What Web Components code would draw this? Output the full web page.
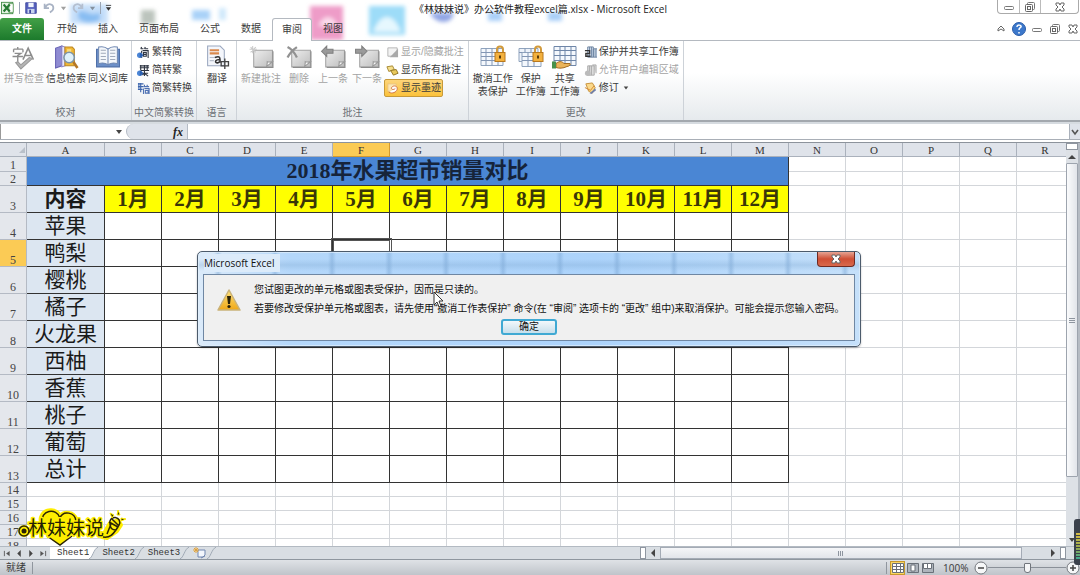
<!DOCTYPE html>
<html lang="zh-CN">
<head>
<meta charset="utf-8">
<title>《林妹妹说》办公软件教程excel篇.xlsx - Microsoft Excel</title>
<style>
html, body { margin: 0; height: 100%; }
body { font: 10px/14px "Liberation Sans", "Noto Sans CJK SC", sans-serif; color: #3b3b3b; background: #fff; overflow: hidden; }
</style>
</head>
<body>
<excel-app></excel-app>
<script>
const define = (name, css, html, setup) => {
  const t = document.createElement('template');
  t.innerHTML = `<style>*{box-sizing:border-box}button,input{font:inherit;color:inherit;margin:0;padding:0;border:0;background:none;outline:0}svg{display:block}${css}</style>${html}`;
  customElements.define(name, class extends HTMLElement {
    constructor() {
      super();
      this.attachShadow({ mode: 'open' }).append(t.content.cloneNode(true));
    }
    connectedCallback() { if (setup && !this.ready) { this.ready = true; setup(this, this.shadowRoot); } }
  });
};

/* ---------- icons ---------- */
const note = '<path d="M5 5h18v16H5z" fill="url(#n)" stroke="#a3a3a3"/><path d="M6 21.500h17.500V6" fill="none" stroke="#8c8c8c"/><path d="M17 21c1-1 1-3 1-5 2 1 4 0 5 0z" fill="#fafafa" stroke="#999"/>';
const ndef = '<defs><linearGradient id="n" x2="1" y2="1"><stop stop-color="#eee"/><stop offset="1" stop-color="#bdbdbd"/></linearGradient></defs>';
const sheet = '<path d="M1 3h22v17H1z" fill="#f4f8fd" stroke="#8fa3bd"/><path d="M1 7h22M1 11h22M1 15h22M6 3v17M12 3v17M18 3v17" stroke="#8296b4" fill="none"/>';
const lock = '<path d="M17 7V4a3 3 0 016 0v3" fill="none" stroke="#d19a3c" stroke-width="2"/><rect x="15" y="7" width="10" height="9" fill="#f3b13e" stroke="#b8781e"/><path d="M20 10v3" stroke="#5a3a08" stroke-width="2"/>';
const arrowBall = '<circle cx="3" cy="10" r="3" fill="#4c86d6"/><path d="M3 7l4 3-4 3z" fill="#2b5fb0"/>';
const ICONS = {
  excel: ['0 0 16 16', '<rect x=".5" y="1.500" width="13" height="13" fill="#e4f2e2" stroke="#3f8a45"/><path d="M9 3h5v10H9z" fill="#fff" stroke="#5b9c5c"/><path d="M3 4l7 8M10 4l-7 8" stroke="#267a33" stroke-width="2.400"/>'],
  save: ['0 0 16 16', '<path d="M2 2h12v12H2z" fill="#5560bd" stroke="#3d469b"/><path d="M5 2h6v5H5z" fill="#eef2fb"/><path d="M4 9h8v5H4z" fill="#c8d4ee"/><path d="M6 10h2v4H6z" fill="#3d469b"/>'],
  undo: ['0 0 16 16', '<path d="M3 3v5h5M4 7c3-5 9-4 9 1 0 3-2 4-4 5" fill="none" stroke="#a9b3c4" stroke-width="2"/>'],
  redo: ['0 0 16 16', '<path d="M13 3v5H8M12 7c-3-5-9-4-9 1 0 3 2 4 4 5" fill="none" stroke="#b4bfd0" stroke-width="2"/>'],
  down: ['0 0 8 8', '<path d="M1 2h6L4 6z" fill="#444"/>'],
  qat: ['0 0 8 8', '<path d="M1 1h6" stroke="#333"/><path d="M1 3h6L4 7z" fill="#333"/>'],
  spell: ['0 0 24 24', '<path d="M2 4h9M6 2v2M2 4v3M11 4v3M3 8h6l-3 2v6M1 11h10" fill="none" stroke="#8b8b8b" stroke-width="1.300"/><path d="M11 14l5-11 5 11M13 10h7" fill="none" stroke="#8b8b8b" stroke-width="1.500"/><path d="M4 17l5 6L20 13l-3-1-8 7-3-3z" fill="#b5b5b5" stroke="#999"/>'],
  research: ['0 0 24 24', '<path d="M2 3l6-2v19l-6 2z" fill="#8f8bd2" stroke="#6762b4"/><path d="M8 1l3 1v18l-3 1z" fill="#e9e7fb" stroke="#8b87c9"/><path d="M11 2h7l2 2v16h-9z" fill="#f0b834" stroke="#bd8724"/><path d="M13 4h4v12h-4z" fill="#fadb82"/><path d="M19 16l4 6" stroke="#b67826" stroke-width="2.500"/><circle cx="15" cy="12" r="5" fill="#dff1fb" stroke="#7d94a7" stroke-width="1.500"/>'],
  book: ['0 0 24 24', '<path d="M1 4h22v17H1z" fill="#6c8fc8" stroke="#4e6fa8"/><path d="M3 2c4-1 7 0 9 2v15c-3-2-6-2-9-1zM21 2c-4-1-7 0-9 2v15c3-2 6-2 9-1z" fill="#f4f7fb" stroke="#7189b2"/><path d="M5 5h5M5 8h5M5 11h5M5 14h5M14 5h5M14 8h5M14 11h5M14 14h5" stroke="#a0aabb"/>'],
  s2t: ['0 0 14 14', '<path d="M4 3h3M5 1L4 3M8 3h4M9 1L8 3M5 5v8M6 5h6v8M7 7h3v4H7zM7 9h3" stroke="#303744" fill="none" stroke-width="1.200"/>' + arrowBall],
  t2s: ['0 0 14 14', '<path d="M3 2h10M4 1v6M3 4h10M8 1v6M11 1v6M4 7h9M8 7v6M4 10h8M5 12l3-2 4 3" stroke="#303744" fill="none" stroke-width="1.200"/>' + arrowBall],
  conv: ['0 0 14 14', '<path d="M1 2h6M2 1v6M1 5h6M4 1v10M1 8h5" stroke="#3c65ad" fill="none" stroke-width="1.200"/><path d="M7 5h6M8 3v2M11 3v2M7 7v6M8 7h5v6M9 9h3v3H9z" stroke="#4f72b4" fill="none" stroke-width="1.200"/>'],
  translate: ['0 0 24 24', '<path d="M3 1h12l4 4v15H3z" fill="#f4f6fb" stroke="#9aa7bf"/><path d="M5 5h9M5 8h9" stroke="#d9894e" stroke-width="2"/><path d="M5 12h6M5 15h4" stroke="#b8bfcc"/><path d="M10 12c5-2 5 0 5 5M15 14c-6 0-5 4-2 3l2-1" fill="none" stroke="#333" stroke-width="1.500"/><path d="M16 16h7v4h-7zM19.500 13v10" fill="none" stroke="#444" stroke-width="1.300"/>'],
  newnote: ['0 0 24 24', ndef + note + '<path d="M4 1v7M1 4h7M2 2l5 5M7 2L2 7" stroke="#c9c9c9"/>'],
  delnote: ['0 0 24 24', ndef + note + '<path d="M1 2c4 2 7 6 9 10M10 2C7 4 3 8 1 12" fill="none" stroke="#929292" stroke-width="2.200"/>'],
  prevnote: ['0 0 24 24', ndef + note + '<path d="M1 6l5-5v3h6v4H6v3z" fill="#9a9a9a" stroke="#808080"/>'],
  nextnote: ['0 0 24 24', ndef + note + '<path d="M12 6L7 1v3H1v4h6v3z" fill="#9a9a9a" stroke="#808080"/>'],
  shownote: ['0 0 14 14', '<path d="M2 2h10v9H2z" fill="#f3f3f3" stroke="#b2b2b2"/><path d="M13 3v9H4z" fill="#a9a9a9"/>'],
  allnotes: ['0 0 14 14', '<path d="M1 3l6-1 2 4-6 2z" fill="#f6df8c" stroke="#a38631"/><path d="M5 7l6-1 2 4-5 2z" fill="#e9c95c" stroke="#8e7020"/>'],
  ink: ['0 0 14 14', '<path d="M2 2h9v8H2z" fill="#fbe6b5" stroke="#ecc47a"/><path d="M3 11c4 2 8 0 9-3 1-4-4-5-6-2-1 2 2 3 4 1" fill="#fff" stroke="#d0703c"/>'],
  unprotect: ['0 0 26 24', sheet + lock],
  protect: ['0 0 26 24', '<path d="M1 3h19v13H1z" fill="#eef3fa" stroke="#8fa3bd"/><path d="M4 7h19v14H4z" fill="#f4f8fd" stroke="#8fa3bd"/><path d="M4 11h19M4 15h19M10 7v14M16 7v14M1 7h3M7 3v4M13 3v4" stroke="#8296b4"/>' + lock],
  share: ['0 0 26 24', '<path d="M2 1h22v19H2z" fill="#f4f8fd" stroke="#6f86a8"/><path d="M2 5h22M2 10h22M2 15h22M8 1v19M13 1v19M19 1v19" stroke="#6f86a8"/><path d="M4 18c4-3 6-2 8 0h6c1 1-1 3-3 3-4 2-8 2-11 1z" fill="#eab45a" stroke="#a36c22"/><path d="M0 16h4v7H0z" fill="#47914a"/>'],
  protshare: ['0 0 14 14', '<path d="M4 1h6v11H4zM10 3h4v9h-4z" fill="#d6e2f1" stroke="#6b829f"/><path d="M6 1v11M8 1v11M12 3v9" stroke="#6b829f"/><path d="M1 5h5v3H2v3h5" fill="none" stroke="#333" stroke-width="1.500"/>'],
  users: ['0 0 14 14', '<path d="M4 2h7v10H4zM9 1h4v9" fill="#dcdcdc" stroke="#a9a9a9"/><path d="M6 2v10M8 2v10" stroke="#a9a9a9"/><circle cx="4" cy="10" r="3" fill="#bbb"/>'],
  track: ['0 0 14 14', '<path d="M2 2l7-1 3 5-3 6-4-2z" fill="#fbd98b" stroke="#c69038"/><path d="M1 6l6 3 4-5" fill="none" stroke="#d4862d"/><path d="M6 12l6-5 1 2-5 4z" fill="#6f7faa"/>'],
  wmin: ['0 0 14 12', '<rect x="2.500" y="5.500" width="9" height="3" rx="1" fill="#fff" stroke="#777"/>'],
  wrest: ['0 0 14 12', '<rect x="4.500" y="1.500" width="7" height="7" rx="1" fill="#fff" stroke="#777"/><rect x="2.500" y="3.500" width="7" height="7" rx="1" fill="#fff" stroke="#666"/><rect x="4.500" y="5.500" width="3" height="3" fill="none" stroke="#666"/>'],
  wclose: ['0 0 14 12', '<path d="M3 2h3l1 2 1-2h3v2L9 6l2 2v2H8L7 8l-1 2H3V8l2-2-2-2z" fill="#fff" stroke="#666"/>'],
  caretup: ['0 0 14 12', '<path d="M4 8V6l3-3 3 3v2L7 6z" fill="#fff" stroke="#666"/>'],
  help: ['0 0 14 14', '<circle cx="7" cy="7" r="6.500" fill="#3c78cb" stroke="#2b5ca8"/><path d="M5 5c0-3 5-2 4 0-1 1-2 1-2 3M7 10v1.500" stroke="#fff" stroke-width="1.500" fill="none"/>'],
  left: ['0 0 8 8', '<path d="M6 0v8L2 4z" fill="#444"/>'],
  right: ['0 0 8 8', '<path d="M2 0v8l4-4z" fill="#444"/>'],
  up: ['0 0 8 8', '<path d="M0 6h8L4 2z" fill="#444"/>'],
  first: ['0 0 8 8', '<path d="M1 1v6" stroke="#555"/><path d="M7 1v6L3 4z" fill="#555"/>'],
  last: ['0 0 8 8', '<path d="M7 1v6" stroke="#555"/><path d="M1 1v6l4-3z" fill="#555"/>'],
  chevron: ['0 0 8 8', '<path d="M1 2l3 4 3-4" fill="none" stroke="#555" stroke-width="1.600"/>'],
  newsheet: ['0 0 14 12', '<path d="M5 3h7v5l-2 2H5z" fill="#f2f6fc" stroke="#7187b0"/><path d="M12 9l-4 2" stroke="#7187b0"/><path d="M3 0v6M0 3h6M1 1l4 4M5 1L1 5" stroke="#e2a33a"/>'],
  vnormal: ['0 0 12 10', '<path d="M.5.500h11v9H.5z" fill="#fff" stroke="#6a7078"/><path d="M1 3.500h10M1 6.500h10M4.500 1v8M8.500 1v8" stroke="#6a7078"/>'],
  vlayout: ['0 0 12 10', '<path d="M.5.500h11v9H.5z" fill="#aeb4bc" stroke="#6a7078"/><path d="M4 2h4v6H4z" fill="#fff" stroke="#6a7078"/>'],
  vbreak: ['0 0 12 10', '<path d="M.5.500h11v9H.5z" fill="#aeb4bc" stroke="#6a7078"/><path d="M1.500.500h4v5h-4zM5.500.500h4v5h-4z" fill="#fff" stroke="#6a7078"/>'],
  minus: ['0 0 14 14', '<circle cx="7" cy="7" r="6" fill="#f6f7f8" stroke="#74787e"/><path d="M4 7h6" stroke="#444" stroke-width="1.500"/>'],
  plus: ['0 0 14 14', '<circle cx="7" cy="7" r="6" fill="#f6f7f8" stroke="#74787e"/><path d="M4 7h6M7 4v6" stroke="#444" stroke-width="1.500"/>'],
  warn: ['0 0 26 24', '<defs><linearGradient id="w" y2="1" x2="0"><stop stop-color="#ffe27a"/><stop offset="1" stop-color="#f0a818"/></linearGradient></defs><path d="M13 2l11 20H2z" fill="url(#w)" stroke="#c9b27a" stroke-width="1.500" stroke-linejoin="round"/><path d="M11 8h4l-1 8h-2z" fill="#2b2208"/><circle cx="13" cy="18.500" r="1.600" fill="#2b2208"/>'],
  corner: ['0 0 8 8', '<path d="M7 1v6H1z" fill="#b9c0c9"/>'],
  slant: ['0 0 10 13', '<path d="M0 13C4 12 5 2 10 0" fill="none" stroke="#9aa4b0"/>'],
  slanton: ['0 0 10 13', '<path d="M0 0h10C5 2 4 12 0 13z" fill="#fff"/><path d="M0 13C4 12 5 2 10 0" fill="none" stroke="#9aa4b0"/>']
};
define('ui-icon', ':host{display:block;flex:none;width:16px;height:16px}svg{width:100%;height:100%}', '', (host, root) => {
  const [box, body] = ICONS[host.getAttribute('name')];
  root.append(document.createRange().createContextualFragment(`<svg viewBox="${box}" aria-hidden="true">${body}</svg>`));
});
const makeIcon = name => {
  const i = document.createElement('ui-icon');
  i.setAttribute('name', name);
  return i;
};

/* ---------- title bar ---------- */
define('title-bar', `
:host{display:flex;height:18px;align-items:center;padding-left:1px;color:#222}
ui-icon{width:14px;height:14px}.s{width:7px;height:7px;opacity:.5}.q{width:7px;height:8px}
.tools{display:flex;align-items:center;gap:4px;flex:1;margin-top:-2px}
i{width:1px;height:12px;background:#99a4b3}
h1{margin:0;font:10px/16px "Open Sans","Noto Sans CJK SC",sans-serif;flex:none;white-space:pre}
.win{flex:1;display:flex;justify-content:flex-end;align-self:flex-start}
.box{display:flex;height:14px;border:1px solid #aaa;border-top:0;border-radius:0 0 4px 4px;margin-right:1px}
button{display:grid;place-items:center;width:21px}button+button{border-left:1px solid #bbb}button:last-child{width:38px}
`, `<div class="tools"><ui-icon name="excel"></ui-icon><i></i><ui-icon name="save"></ui-icon><ui-icon name="undo"></ui-icon><ui-icon class="s" name="down"></ui-icon><ui-icon name="redo"></ui-icon><ui-icon class="s" name="down"></ui-icon><i></i><ui-icon class="q" name="qat"></ui-icon></div>
<h1>《林妹妹说》办公软件教程excel篇.xlsx - Microsoft Excel</h1>
<div class="win"><div class="box"><button aria-label="最小化"><ui-icon name="wmin"></ui-icon></button><button aria-label="还原"><ui-icon name="wrest"></ui-icon></button><button aria-label="关闭"><ui-icon name="wclose"></ui-icon></button></div></div>`);

define('ribbon-tab', `
:host{display:block}
button{height:22px;padding:0 10px;display:block;white-space:nowrap;line-height:20px}
:host([file]) button{padding:0 12px;color:#fff;font-weight:bold;background:linear-gradient(#43a047,#1c7a2c);border-radius:3px 3px 0 0}
:host([file]){margin-right:2px}
:host([on]) button{border:1px solid #b4b9c0;border-bottom:0;border-radius:3px 3px 0 0;background:#fff;padding:0 9px;height:23px;margin-bottom:-1px;line-height:18px;position:relative}
`, '<button><slot></slot></button>');

define('ribbon-tabs', `
:host{display:flex;height:23px;border-bottom:1px solid #b4b9c0;justify-content:space-between}
nav{display:flex;gap:1px}
.r{display:flex;align-items:center;gap:4px}
ui-icon{width:14px;height:12px}ui-icon[name=help]{height:14px}
`, `<nav><ribbon-tab file>文件</ribbon-tab><ribbon-tab>开始</ribbon-tab><ribbon-tab>插入</ribbon-tab><ribbon-tab>页面布局</ribbon-tab><ribbon-tab>公式</ribbon-tab><ribbon-tab>数据</ribbon-tab><ribbon-tab on>审阅</ribbon-tab><ribbon-tab>视图</ribbon-tab></nav>
<div class="r"><button aria-label="折叠功能区"><ui-icon name="caretup"></ui-icon></button><button aria-label="帮助"><ui-icon name="help"></ui-icon></button><button aria-label="最小化工作簿"><ui-icon name="wmin"></ui-icon></button><button aria-label="还原工作簿"><ui-icon name="wrest"></ui-icon></button><button aria-label="关闭工作簿"><ui-icon name="wclose"></ui-icon></button></div>`);

/* blurred desktop glimpsed through the glass frame */
define('glass-backdrop', ':host{position:absolute;inset:0 0 auto 0;height:40px;overflow:hidden;z-index:-1}svg{width:420px;height:40px;overflow:visible}', `
<svg aria-hidden="true"><defs><filter id="b" x="-20%" y="-20%" width="140%" height="140%"><feGaussianBlur stdDeviation="2"/></filter></defs><g filter="url(#b)">
<path d="M70 4h38v20H70z" fill="#c6dff9"/><path d="M78 12c8-4 12 6 22 0v8c-8 4-16 4-22-2z" fill="#88bdf2"/>
<path d="M141 10h14v14h-14z" fill="#bcc4bd"/><path d="M192 10h18v10h-18z" fill="#a9d1f8"/><path d="M219 8h7v12h-7z" fill="#cfe8fb"/>
<path d="M310 6h33v34h-33z" fill="#ee9cc8"/><path d="M318 26c6-12 14-12 20 0z" fill="#fbdcec"/>
<path d="M369 6h36v29h-36z" fill="#9ddcf8"/><path d="M373 32c8-20 20-20 28 0z" fill="#e6f8fe"/>
<path d="M430 13h24c-2 12-18 12-24 0z" fill="#8fa4e4"/><path d="M488 12h14v9h-14z" fill="#a9cff8"/><path d="M548 12h14v9h-14z" fill="#a9cff8"/></g></svg>`);

/* ---------- ribbon ---------- */
define('ribbon-group', `
:host{display:flex;flex-direction:column;border-right:1px solid #cdd2d8;white-space:nowrap}
.body{display:flex;flex:1;padding:2px 2px 0 3px}
.name{text-align:center;color:#6b6f75;height:15px;line-height:15px}
`, '<div class="body"><slot></slot></div><div class="name"></div>', (h, r) => { r.querySelector('.name').textContent = h.getAttribute('label'); });

define('big-button', `
:host{display:block;width:42px}:host([narrow]){width:34px}
button{width:100%;display:flex;flex-direction:column;align-items:center;gap:2px;padding-top:2px;line-height:13px;text-align:center}
button:disabled{color:#a3a3a3}ui-icon{width:26px;height:25px}
`, '<button><span><slot></slot></span></button>', (h, r) => {
  const b = r.querySelector('button');
  b.prepend(makeIcon(h.getAttribute('icon')));
  b.disabled = h.hasAttribute('off');
});

define('small-button', `
:host{display:block}
button{display:flex;align-items:center;gap:2px;height:18px;line-height:16px;padding:0 1px;border:1px solid transparent}
button:disabled{color:#a3a3a3}
:host([on]) button{background:linear-gradient(#fdd57a,#fbc23c);border-color:#c79a3a;border-radius:2px}
ui-icon{width:13px;height:13px}.d{width:6px;height:6px;margin-left:2px;display:none}:host([menu]) .d{display:block}
`, '<button><span><slot></slot></span><ui-icon class="d" name="down"></ui-icon></button>', (h, r) => {
  const b = r.querySelector('button');
  b.prepend(makeIcon(h.getAttribute('icon')));
  b.disabled = h.hasAttribute('off');
});

define('excel-ribbon', `
:host{display:flex;height:81px;box-sizing:border-box;background:linear-gradient(#fff 40%,#e6eaed);border-bottom:2px solid #a3a8ae}
.col{display:flex;flex-direction:column}
`, `
<ribbon-group label="校对"><big-button icon="spell" off>拼写检查</big-button><big-button icon="research">信息检索</big-button><big-button icon="book">同义词库</big-button></ribbon-group>
<ribbon-group label="中文简繁转换"><div class="col"><small-button icon="s2t">繁转简</small-button><small-button icon="t2s">简转繁</small-button><small-button icon="conv">简繁转换</small-button></div></ribbon-group>
<ribbon-group label="语言"><big-button narrow icon="translate">翻译</big-button></ribbon-group>
<ribbon-group label="批注"><big-button icon="newnote" off>新建批注</big-button><big-button narrow icon="delnote" off>删除</big-button><big-button narrow icon="prevnote" off>上一条</big-button><big-button narrow icon="nextnote" off>下一条</big-button><div class="col"><small-button icon="shownote" off>显示/隐藏批注</small-button><small-button icon="allnotes">显示所有批注</small-button><small-button icon="ink" on>显示墨迹</small-button></div></ribbon-group>
<ribbon-group label="更改"><big-button icon="unprotect">撤消工作<br>表保护</big-button><big-button narrow icon="protect">保护<br>工作簿</big-button><big-button narrow icon="share">共享<br>工作簿</big-button><div class="col"><small-button icon="protshare">保护并共享工作簿</small-button><small-button icon="users" off>允许用户编辑区域</small-button><small-button icon="track" menu>修订</small-button></div></ribbon-group>`);

define('formula-bar', `
:host{display:flex;height:18px;background:#fff;border-top:2px solid #d6dbe0;border-bottom:1px solid #a9afb7;box-sizing:border-box}
.name{display:flex;align-items:center;width:126px;padding-right:3px;border-left:1px solid #999}
.name input{flex:1;min-width:0}
.fx{width:62px;background:#dfe3ea;border:solid #b4bbc5;border-width:0 1px 0 1px;border-radius:8px 0 0 8px;display:flex;justify-content:flex-end;align-items:center;padding-right:4px;font:italic bold 12px/14px "Liberation Serif",serif;color:#222}
.f{flex:1;min-width:0;padding:0 4px}
.x{width:11px;background:#dfe3ea;border-left:1px solid #aab1bb;display:grid;place-items:center}
ui-icon{width:8px;height:8px}
`, '<div class="name"><input aria-label="名称框"><button aria-label="名称列表"><ui-icon name="down"></ui-icon></button></div><button class="fx" aria-label="插入函数">fx</button><input class="f" aria-label="编辑栏"><button class="x" aria-label="展开编辑栏"><ui-icon name="chevron"></ui-icon></button>');

/* ---------- worksheet ---------- */
define('sheet-grid', `
:host{display:block;overflow:hidden;min-width:0;min-height:0;background:#fff}
table{table-layout:fixed;border-collapse:separate;border-spacing:0;width:1074px}
th,td{padding:0;border:solid #d3d6da;border-width:0 1px 1px 0;height:27px;white-space:nowrap;overflow:hidden;text-align:center}
thead th{height:14px;background:#dfe3ea;border-color:#aab1bc;font:11px/12px "Liberation Serif",serif;color:#333;padding-top:1px}
tbody th{background:#e4e7ec;border-color:#b4bac4;font:12px/12px "Liberation Serif",serif;color:#444;vertical-align:bottom}
tr.s th,tr.s td{height:14px}tr.t th{height:15px}
thead th.on{background:#fbcb55;border-color:#d39a2f}tbody th.on{background:#fbcb55}
td.k{border-color:#333}
td.a{background:#dce6f1;font:21px/26px "Liberation Serif","Noto Sans CJK SC",serif;color:#1a1a1a}
td.b{font-weight:bold}
td.h{background:#ffff00;font:bold 21px/26px "Liberation Serif","Noto Sans CJK SC",serif;color:#3a3708}
td.title{background:#4a86d4;font:bold 22px/28px "Liberation Serif","Noto Sans CJK SC",serif;color:#16243a}
td.cur{outline:3px double #555;outline-offset:-1px;position:relative}
ui-icon{width:8px;height:8px;margin-left:auto}
`, '<table aria-label="2018年水果超市销量对比"></table>', (h, r) => {
  const letters = 'ABCDEFGHIJKLMNOPQR'.split('');
  const fruit = ['苹果', '鸭梨', '樱桃', '橘子', '火龙果', '西柚', '香蕉', '桃子', '葡萄', '总计'];
  const blank = n => '<td></td>'.repeat(n);
  let s = '<colgroup><col style="width:27px"><col style="width:78px">' + '<col style="width:57px">'.repeat(17) + '</colgroup><thead><tr><th><ui-icon name="corner"></ui-icon></th>';
  s += letters.map(l => `<th${l === 'F' ? ' class="on"' : ''}>${l}</th>`).join('') + '</tr></thead><tbody>';
  s += '<tr class="s t"><th>1</th><td class="k title" colspan="13" rowspan="2">2018年水果超市销量对比</td>' + blank(5) + '</tr><tr class="s"><th>2</th>' + blank(5) + '</tr>';
  s += '<tr><th>3</th><td class="k a b">内容</td>';
  for (let m = 1; m < 13; m++) s += `<td class="k h">${m}月</td>`;
  s += blank(5) + '</tr>';
  fruit.forEach((f, i) => {
    const n = i + 4;
    s += `<tr><th${n === 5 ? ' class="on"' : ''}>${n}</th><td class="k a">${f}</td>`;
    for (let m = 0; m < 12; m++) s += `<td class="k${n === 5 && m === 4 ? ' cur' : ''}"></td>`;
    s += blank(5) + '</tr>';
  });
  for (let n = 14; n < 19; n++) s += `<tr class="s"><th>${n}</th>${blank(18)}</tr>`;
  r.querySelector('table').innerHTML = s + '</tbody>';
});

define('v-scroll', `
:host{display:flex;flex-direction:column;background:#dde1e6;align-items:stretch;border-right:2px solid #b5bbc3;box-sizing:border-box}
.split{height:7px;border:1px solid #8f96a0;background:#fff}
button{display:grid;place-items:center;height:13px}ui-icon{width:8px;height:8px}
.thumb{flex:84;border:1px solid #9da4ae;border-radius:1px;background:linear-gradient(90deg,#fafbfc,#e2e5ea);display:grid;place-items:center}
.thumb i{width:6px;height:5px;background:repeating-linear-gradient(#8e959f 0 1px,transparent 1px 2px)}
.rest{flex:15}
`, '<div class="split"></div><button aria-label="向上滚动"><ui-icon name="up"></ui-icon></button><div class="thumb"><i></i></div><div class="rest"></div><button aria-label="向下滚动"><ui-icon name="down"></ui-icon></button>');

define('sheet-bar', `
:host{display:flex;height:14px;background:#d9dee3;border-top:1px solid #b3bac2;border-bottom:1px solid #8f979f;box-sizing:border-box;font:9px/12px "Liberation Mono",monospace;color:#333}
.nav{display:flex;align-items:center;gap:4px;padding:0 3px;width:50px}
.nav ui-icon{width:8px;height:7px}
.tabs{display:flex;flex:1}.tabs button{padding-left:4px;line-height:13px}.tabs>ui-icon{width:9px;height:12px}
.tabs .on{background:#fff;padding-left:7px}.new ui-icon{width:14px;height:12px}
.h{display:flex;align-items:center;width:426px;gap:3px}
.h button{display:grid}.h button ui-icon{width:8px;height:8px}
.split{width:6px;height:12px;border:1px solid #8f96a0;background:#fff}
.thumb{flex:1;height:12px;border:1px solid #a4abb5;background:linear-gradient(#f5f6f8,#e2e5ea);display:grid;place-items:center;margin-right:24px}
.thumb i{width:6px;height:5px;background:repeating-linear-gradient(90deg,#8e959f 0 1px,transparent 1px 2px)}
.end{width:14px}
`, `<div class="nav"><ui-icon name="first"></ui-icon><ui-icon name="left"></ui-icon><ui-icon name="right"></ui-icon><ui-icon name="last"></ui-icon></div>
<div class="tabs"><button class="on">Sheet1</button><ui-icon name="slanton"></ui-icon><button>Sheet2</button><ui-icon name="slant"></ui-icon><button>Sheet3</button><ui-icon name="slant"></ui-icon><button class="new" aria-label="插入工作表"><ui-icon name="newsheet"></ui-icon></button><ui-icon name="slant"></ui-icon></div>
<div class="h"><div class="split"></div><button aria-label="向左滚动"><ui-icon name="left"></ui-icon></button><div class="thumb"><i></i></div><button aria-label="向右滚动"><ui-icon name="right"></ui-icon></button><div class="split"></div></div><div class="end"></div>`);

define('status-bar', `
:host{display:flex;height:15px;align-items:center;background:linear-gradient(#dfe2e6,#bfc4ca);padding-left:6px;box-sizing:border-box;line-height:14px}
i{width:1px;height:12px;background:#90969e;margin-left:6px}.sp{flex:1}
.v{display:grid;place-items:center;width:15px;height:14px}.v ui-icon{width:12px;height:10px}
.v.on{background:#fbd765;border:1px solid #c79a2d}
.views{display:flex;padding:0 8px 0 3px}
output{width:31px;font:10px/14px "Open Sans",sans-serif}
.z ui-icon{width:14px;height:14px}
input{appearance:none;width:78px;height:12px;background:linear-gradient(#8a9098,#8a9098) center/100% 1px no-repeat}
input::-webkit-slider-thumb{appearance:none;width:7px;height:10px;background:#f5f6f7;border:1px solid #70757c;border-radius:1px 1px 3px 3px}
`, `<span>就绪</span><i></i><span class="sp"></span><i></i><div class="views"><button class="v on" aria-label="普通"><ui-icon name="vnormal"></ui-icon></button><button class="v" aria-label="页面布局"><ui-icon name="vlayout"></ui-icon></button><button class="v" aria-label="分页预览"><ui-icon name="vbreak"></ui-icon></button></div><output>100%</output><button class="z" aria-label="缩小"><ui-icon name="minus"></ui-icon></button><input type="range" aria-label="显示比例" min="0" max="200" value="100"><button class="z" aria-label="放大"><ui-icon name="plus"></ui-icon></button>`);

/* ---------- floating things ---------- */
define('alert-dialog', `
:host{position:absolute;left:197px;top:251px;width:664px;box-sizing:border-box;border:1px solid #4c5b6c;border-radius:5px;padding:0 5px 5px;color:#111;
background:linear-gradient(transparent 7px,#7fa9d255 13px,transparent 19px),repeating-linear-gradient(90deg,transparent 0 16px,#6f9ccc66 20px,transparent 24px 57px) 0 0/100% 22px no-repeat,linear-gradient(90deg,#dcebfa,#b4d7fa 14%,#acd3fb 60%,#c5e0fa);box-shadow:inset 0 0 0 1px #e2f0fcaa,0 1px 2px #0004}
header{display:flex;justify-content:space-between;height:22px;padding-left:1px}
h2{margin:0;font:10px/18px "Open Sans",sans-serif;background:#dcebfa;padding-right:6px;align-self:center}
.x{width:38px;height:15px;border:1px solid #6f2a22;border-top:0;border-radius:0 0 4px 4px;background:linear-gradient(#e6a493,#cf4f35 50%,#d8694c);display:grid;place-items:center}
.x ui-icon{width:14px;height:12px}
.body{background:#f0f0f0;border:1px solid #6f87a3;display:grid;grid-template-columns:50px 1fr;padding:5px 0 4px;height:67px}
.body>ui-icon{width:26px;height:24px;margin:8px 0 0 12px}
p{margin:0;line-height:19px;white-space:nowrap}
footer{grid-column:1/-1;display:flex;justify-content:center}
footer button{width:56px;height:16px;line-height:12px;border:2px solid #3fa9d3;border-radius:3px;background:linear-gradient(#f2f8fb,#c7dfeb)}
`, `<header><h2>Microsoft Excel</h2><button class="x" aria-label="关闭"><ui-icon name="wclose"></ui-icon></button></header>
<div class="body"><ui-icon name="warn"></ui-icon><div><p>您试图更改的单元格或图表受保护，因而是只读的。</p><p>若要修改受保护单元格或图表，请先使用“撤消工作表保护” 命令(在 “审阅” 选项卡的 “更改” 组中)来取消保护。可能会提示您输入密码。</p></div><footer><button>确定</button></footer></div>`);

define('mouse-pointer', ':host{position:absolute;left:433px;top:291px;width:12px;height:18px}svg{width:12px;height:18px}', '<svg viewBox="0 0 12 18" aria-hidden="true"><path d="M1 1v13l3-3 2 5 2-1-2-5h4z" fill="#fff" stroke="#333"/></svg>');

define('brand-mark', ':host{position:absolute;left:16px;bottom:28px;width:112px;height:40px}svg{width:112px;height:40px}text{font:19px "Noto Sans CJK SC",sans-serif}', `
<svg viewBox="0 0 112 40"><g fill="#ffee00" stroke="#ffee00" stroke-width="4" stroke-linejoin="round"><path d="M44 36C32 29 21 16 26 8c4-7 15-6 18 1 4-5 14-4 16 3 2 8-7 17-16 24z"/><circle cx="8" cy="24" r="4"/><path d="M86 30l8-14 8-3 3 5-4 6-10 7z"/></g>
<path d="M27 16c-4-13 14-16 17-5 3-8 15-6 16 3M31 29l13 9 12-9" fill="none" stroke="#2b2406" stroke-width="1.500"/>
<text x="12" y="28" fill="#241f05" stroke="#ffee00" stroke-width="3" paint-order="stroke" stroke-linejoin="round">林妹妹说</text>
<g fill="none" stroke="#2b2406" stroke-width="1.500"><circle cx="8" cy="24" r="5"/><path d="M87 30c8 1 10-3 15-10M91 27l4-10M94 17a5 5 0 119 1l-3 5c-4 0-6-2-6-6zM93 15l9 5M96 12l6 6"/></g><circle cx="8" cy="24" r="2.500" fill="#2b2406"/><path d="M94 6l4 2-2 3zM102 3l2 5-3 0zM110 12l-5 2v-3z" fill="#2b2406" stroke="#ffee00"/></svg>`);

define('side-widget', ':host{position:absolute;right:0;bottom:10px;width:6px;height:46px;background:#3b414c;border-radius:3px 0 0 3px;box-sizing:border-box;padding:14px 0 5px 2px}div{height:100%;background:repeating-linear-gradient(transparent 0 2px,#3b414c 2px 3px),linear-gradient(#d9bd44,#98a94e 55%,#35a99a)}', '<div></div>');

define('excel-app', `
:host{display:flex;flex-direction:column;height:100vh;position:relative;isolation:isolate;overflow:hidden}
main{flex:1;min-height:0;display:grid;grid-template-columns:1fr 14px;grid-template-rows:minmax(0,1fr);border-top:1px solid #8c939c;margin-top:2px}
`, `<glass-backdrop></glass-backdrop><title-bar></title-bar><ribbon-tabs></ribbon-tabs><excel-ribbon></excel-ribbon><formula-bar></formula-bar>
<main><sheet-grid></sheet-grid><v-scroll></v-scroll></main><sheet-bar></sheet-bar><status-bar></status-bar>
<brand-mark></brand-mark><side-widget></side-widget><alert-dialog role="alertdialog"></alert-dialog><mouse-pointer></mouse-pointer>`);
</script>
</body>
</html>
